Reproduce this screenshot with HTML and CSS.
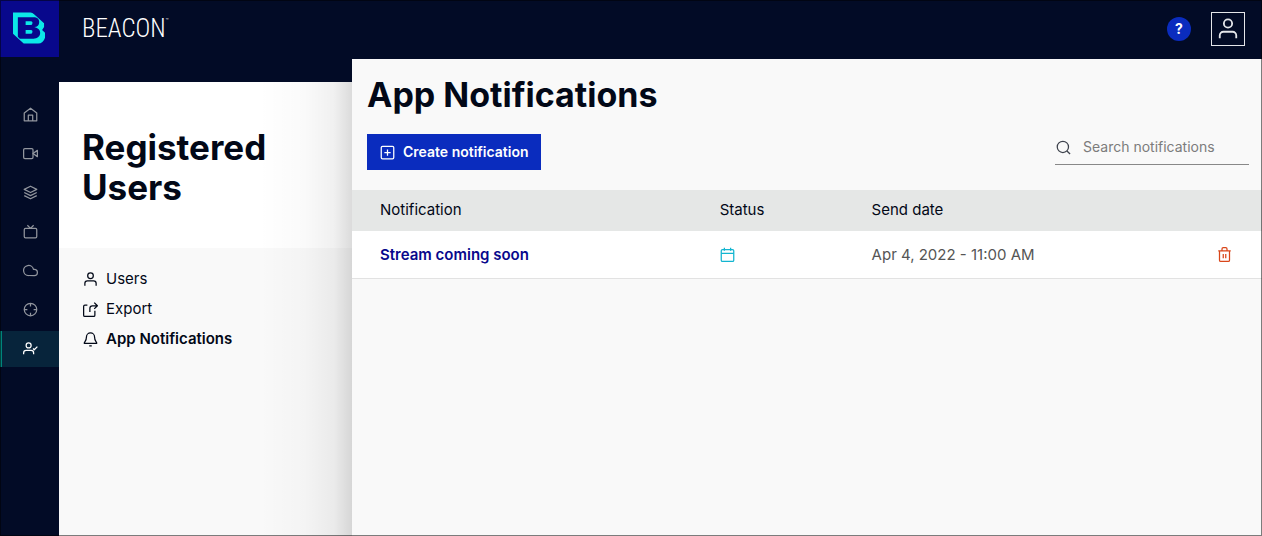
FILE: index.html
```html
<!DOCTYPE html>
<html lang="en">
<head>
<meta charset="utf-8">
<meta name="viewport" content="width=device-width, initial-scale=1">
<title>App Notifications - Beacon</title>
<link rel="stylesheet" href="styles.css">
</head>
<body>
<div class="app">
  <div class="rail">
    <a class="logo" href="#" aria-label="Beacon home">
      <svg width="34" height="34" viewBox="0 0 34 34" aria-hidden="true">
        <path fill="#0ce8e8" d="M0 1H18Q20 1 22 3L32 12V16L30 19L33 22V27Q31 33 26 33H11L0 23Z"/>
        <path fill="#08088c" fill-rule="evenodd" d="M5 6H21C25 6 27 8 27 11C27 14 25 16 22 16C26 17 28 19 28 22C28 26 25 28 21 28H7L5 26ZM13 10H18Q20 10 20 11V12Q20 14 18 14H13ZM13 19H18Q20 19 20 20V21Q20 23 18 23H13Z"/>
      </svg>
    </a>
    <nav class="rail-nav" aria-label="Main">
      <a class="rail-link" href="#" aria-label="Home"><svg class="icon" viewBox="0 0 24 24"><path d="M2 9.500 12 2l10 7.500V22H2z M8.500 22v-9h7v9"/></svg></a>
      <a class="rail-link" href="#" aria-label="Videos"><svg class="icon" viewBox="0 0 24 24"><rect x="1" y="4" width="15" height="16" rx="2"/><path d="m16 12 7-5v10z"/></svg></a>
      <a class="rail-link" href="#" aria-label="Collections"><svg class="icon" viewBox="0 0 24 24"><path d="M12 2 2 7l10 5 10-5zM2 12l10 5 10-5M2 17l10 5 10-5"/></svg></a>
      <a class="rail-link" href="#" aria-label="Channels"><svg class="icon" viewBox="0 0 24 24"><rect x="2" y="7" width="20" height="15" rx="2"/><path d="m17 2-5 5-5-5"/></svg></a>
      <a class="rail-link" href="#" aria-label="Cloud"><svg class="icon" viewBox="0 0 24 24"><path d="M18 10h-1.300A8 8 0 1 0 9 20h9a5 5 0 0 0 0-10z"/></svg></a>
      <a class="rail-link" href="#" aria-label="Targets"><svg class="icon" viewBox="0 0 24 24"><circle cx="12" cy="12" r="10"/><path d="M22 12h-5M7 12H2M12 7V2M12 22v-5"/></svg></a>
      <a class="rail-link rail-link-active" href="#" aria-label="Registered users" aria-current="page"><svg class="icon" viewBox="0 0 24 24"><path d="M17 21v-2a4 4 0 0 0-4-4H5a4 4 0 0 0-4 4v2"/><circle cx="9" cy="7" r="4"/><path d="m16 12 2 2 5-5"/></svg></a>
    </nav>
  </div>

  <header class="topbar">
    <div class="brand">BEACON<span class="trademark">™</span></div>
    <div class="account">
      <button class="help" type="button" aria-label="Help">?</button>
      <button class="profile" type="button" aria-label="Profile"><svg class="icon" viewBox="0 0 24 24"><path d="M21 22v-3a4 4 0 0 0-4-4H7a4 4 0 0 0-4 4v3"/><circle cx="12" cy="6" r="4.500"/></svg></button>
    </div>
  </header>

  <aside class="section">
    <h2 class="section-title">Registered Users</h2>
    <nav class="section-nav" aria-label="Registered Users">
      <a class="section-link" href="#"><svg class="icon" viewBox="0 0 24 24"><path d="M21 22v-4a4 4 0 0 0-4-4H7a4 4 0 0 0-4 4v4"/><circle cx="12" cy="6" r="4.500"/></svg>Users</a>
      <a class="section-link" href="#"><svg class="icon" viewBox="0 0 24 24"><path d="M7 5H3a2 2 0 0 0-2 2v14a2 2 0 0 0 2 2h14a2 2 0 0 0 2-2v-7M11 16v-6a4 4 0 0 1 4-4h8M18 1l5 5-5 5"/></svg>Export</a>
      <a class="section-link section-link-active" href="#" aria-current="page"><svg class="icon" viewBox="0 0 24 24"><path d="M18.500 8A6.500 6.500 0 0 0 5.500 8c0 7-3.500 7-3.500 10h20c0-3-3.500-3-3.500-10M10 22h4"/></svg>App Notifications</a>
    </nav>
  </aside>

  <main class="panel">
    <h1 class="panel-title">App Notifications</h1>
    <div class="toolbar">
      <button class="create" type="button"><svg class="icon" viewBox="0 0 24 24"><rect x="2" y="2" width="20" height="20" rx="2"/><path d="M12 7v10M7 12h10"/></svg>Create notification</button>
      <label class="search"><svg class="icon" viewBox="0 0 24 24" aria-hidden="true"><circle cx="11" cy="11" r="9"/><path d="m17.500 17.500 5 5"/></svg><input class="search-input" type="search" aria-label="Search notifications" placeholder="Search notifications"></label>
    </div>
    <table class="list">
      <thead>
        <tr><th class="col-name">Notification</th><th class="col-status">Status</th><th>Send date</th><th class="col-action" aria-label="Actions"></th></tr>
      </thead>
      <tbody>
        <tr>
          <td class="col-name"><a class="item" href="#">Stream coming soon</a></td>
          <td><svg class="icon scheduled" viewBox="0 0 24 24" role="img" aria-label="Scheduled"><rect x="2" y="4" width="20" height="19" rx="2"/><path d="M2 10h20M7 1v5M17 1v5"/></svg></td>
          <td>Apr 4, 2022 - 11:00 AM</td>
          <td class="col-action"><button class="delete" type="button" aria-label="Delete"><svg class="icon" viewBox="0 0 24 24"><path d="M2 6h20M4 6v15a2 2 0 0 0 2 2h12a2 2 0 0 0 2-2V6M8 6V3a2 2 0 0 1 2-2h4a2 2 0 0 1 2 2v3M10 11v7M14 11v7"/></svg></button></td>
        </tr>
      </tbody>
    </table>
  </main>
</div>
</body>
</html>
```
FILE: styles.css
```css
* {
  box-sizing: border-box;
}

body {
  margin: 0;
  font-family: Inter, "Open Sans", sans-serif;
  font-size: 15px;
  line-height: 20px;
  color: #020817;
}

/* Hairline frame around the window */
body::after {
  content: "";
  position: fixed;
  inset: 0;
  border: 1px solid rgba(0, 0, 0, 0.5);
  pointer-events: none;
}

a {
  color: inherit;
  text-decoration: none;
}

button {
  padding: 0;
  border: 0;
  font: inherit;
  cursor: pointer;
}

.icon {
  display: block;
  flex: none;
  width: 15px;
  height: 15px;
  fill: none;
  stroke: currentColor;
  stroke-width: 2;
  stroke-linejoin: round;
}

.app {
  display: grid;
  grid-template-columns: 59px 293px 1fr;
  grid-template-rows: auto 1fr;
  min-height: 100vh;
  background: #020b26;
}

.rail {
  grid-row: 1 / 3;
}

.logo {
  display: flex;
  padding: 11px 13px 12px;
  background: #08088c;
}

.rail-nav {
  display: grid;
  gap: 3px;
  padding-top: 40px;
}

.rail-link {
  display: flex;
  align-items: center;
  justify-content: center;
  height: 36px;
  padding-bottom: 1px;
  border-left: 2px solid transparent;
  color: #92969e;
}

.rail-link-active {
  border-color: #00847c;
  background: #07243b;
  color: #fff;
}

.topbar {
  grid-column: 2 / 4;
  display: flex;
  align-items: center;
  justify-content: space-between;
  height: 59px;
  padding: 0 17px 1px 23px;
}

.brand {
  display: flex;
  font-family: "Roboto Condensed", "Liberation Sans Narrow", Roboto, sans-serif;
  font-size: 25px;
  font-weight: 300;
  line-height: 28px;
  color: #fff;
}

.trademark {
  font-size: 6px;
  line-height: 10px;
}

.account {
  display: flex;
  align-items: center;
  gap: 20px;
}

.help {
  width: 24px;
  height: 24px;
  border-radius: 50%;
  background: #0a2cbe;
  color: #fff;
  font-size: 14px;
  font-weight: 700;
}

.profile {
  display: flex;
  align-items: center;
  justify-content: center;
  width: 34px;
  height: 34px;
  border: 1px solid #e4e6ea;
  background: none;
  color: #e4e6ea;
}

.profile .icon {
  width: 22px;
  height: 22px;
}

.section {
  margin-top: 23px;
  background: linear-gradient(to right, transparent 200px, rgba(0, 0, 0, 0.02) 245px, rgba(0, 0, 0, 0.06) 275px, rgba(0, 0, 0, 0.14)), linear-gradient(#fff 166px, #f9f9f9 166px);
}

.section-title {
  margin: 0;
  padding: 45px 60px 41px 23px;
  font-size: 35px;
  line-height: 40px;
}

.section-nav {
  display: grid;
  padding: 16px 24px;
}

.section-link {
  display: flex;
  align-items: center;
  gap: 8px;
  height: 30px;
}

.section-link-active {
  font-weight: 600;
}

.panel {
  background: #f9f9f9;
}

.panel-title {
  margin: 0;
  padding: 16px 15px;
  font-size: 34px;
  line-height: 40px;
}

.toolbar {
  display: flex;
  align-items: flex-start;
  justify-content: space-between;
  padding: 3px 13px 20px 15px;
}

.create {
  display: flex;
  align-items: center;
  gap: 8px;
  height: 36px;
  padding: 0 12px 0 13px;
  background: #0a2cbe;
  color: #fff;
  font-size: 14px;
  font-weight: 600;
}

.search {
  display: flex;
  align-items: center;
  gap: 12px;
  width: 194px;
  height: 31px;
  padding: 0 1px 4px;
  border-bottom: 1px solid #888;
  color: #3d424c;
}

.search-input {
  flex: 1;
  min-width: 0;
  padding: 0;
  border: 0;
  background: none;
  font: inherit;
  font-size: 14px;
}

.search-input::placeholder {
  color: #7c7c7c;
}

.list {
  width: 100%;
  border-spacing: 0;
  table-layout: fixed;
}

.list th {
  height: 41px;
  padding: 0 0 1px;
  background: #e5e7e6;
  font-weight: 400;
  text-align: left;
}

.list td {
  height: 48px;
  padding: 0;
  border-bottom: 1px solid #e2e2e2;
  background: #fff;
  color: #555;
}

.list .col-name {
  width: 40.4%;
  padding-left: 28px;
}

.col-status {
  width: 16.7%;
}

.col-action {
  width: 45px;
}

.item {
  color: #08088c;
  font-weight: 600;
}

.list .scheduled {
  color: #12b5d0;
}

.delete {
  display: block;
  background: none;
  color: #d9461a;
}
```
